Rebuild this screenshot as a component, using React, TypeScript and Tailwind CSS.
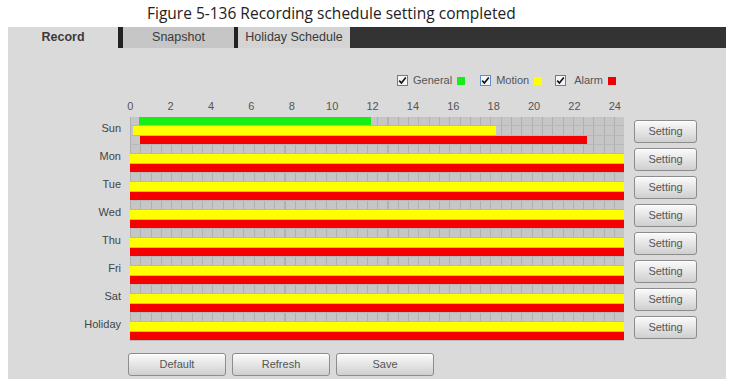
import React from "react"

type Bar = { from: number; to: number }
type Day = { name: string; general: Bar[]; motion: Bar[]; alarm: Bar[] }

const full: Bar[] = [{ from: 0, to: 24 }]

const days: Day[] = [
  { name: "Sun", general: [{ from: 0.44, to: 11.7 }], motion: [{ from: 0.15, to: 17.8 }], alarm: [{ from: 0.5, to: 22.2 }] },
  { name: "Mon", general: [], motion: full, alarm: full },
  { name: "Tue", general: [], motion: full, alarm: full },
  { name: "Wed", general: [], motion: full, alarm: full },
  { name: "Thu", general: [], motion: full, alarm: full },
  { name: "Fri", general: [], motion: full, alarm: full },
  { name: "Sat", general: [], motion: full, alarm: full },
  { name: "Holiday", general: [], motion: full, alarm: full },
]

const hours = [0, 2, 4, 6, 8, 10, 12, 14, 16, 18, 20, 22, 24]

const font = { fontFamily: '"Liberation Sans", Arial, sans-serif' }

const Check = ({ blue }: { blue?: boolean }) => (
  <span className={`flex h-[11px] w-[11px] items-center justify-center border bg-[#f4f4f4] ${blue ? "border-[#5b8fd0]" : "border-[#7a7a7a]"}`}>
    <svg width="9" height="9" viewBox="0 0 9 9">
      <path d="M1.2 4.6 L3.4 7 L7.8 1.4" fill="none" stroke="#111" strokeWidth="1.6" />
    </svg>
  </span>
)

const Btn = ({ label, w }: { label: string; w: string }) => (
  <div className={`${w} flex h-[23px] items-center justify-center rounded-[3px] border border-[#8c8c8c] bg-gradient-to-b from-[#fbfbfb] to-[#cfcfcf] text-[11px] text-[#555] shadow-[inset_0_1px_0_#fff]`}>
    {label}
  </div>
)

const SubRow = ({ bars, color, h }: { bars: Bar[]; color: string; h: string }) => (
  <div className={`relative ${h} border-b border-[#b8b8b8] bg-[#c6c6c6] bg-[repeating-linear-gradient(90deg,#b0b0b0_0px,#b0b0b0_1px,transparent_1px,transparent_10.3px)]`}>
    {bars.map((b, i) => (
      <div
        key={i}
        className={`absolute top-0 h-full ${color}`}
        style={{ left: `${(b.from / 24) * 100}%`, width: `${((b.to - b.from) / 24) * 100}%` }}
      />
    ))}
  </div>
)

export default function App() {
  return (
    <div className="h-[387px] w-[739px] bg-white" style={font}>
      <div className="flex h-[27px] items-center pl-[147px] text-[15.5px] text-[#222]" style={{ fontFamily: '"Open Sans", sans-serif' }}>
        Figure 5-136 Recording schedule setting completed
      </div>

      <div className="ml-[8px] w-[718px] bg-[#dadada] pb-[3px]">
        {/* tabs */}
        <div className="flex h-[21px] bg-[#333333] text-[12.5px] text-[#3a3a3a]">
          <div className="flex w-[110px] items-center justify-center bg-[#dadada] font-bold">Record</div>
          <div className="w-[5px] bg-[#222]" />
          <div className="flex w-[111px] items-center justify-center bg-[#c6c6c6]">Snapshot</div>
          <div className="w-[4px] bg-[#222]" />
          <div className="flex w-[112px] items-center justify-center bg-[#d4d4d4]">Holiday Schedule</div>
        </div>

        {/* legend */}
        <div className="mt-[27px] flex h-[11px] items-center pl-[389px] text-[11px] text-[#555]">
          <Check />
          <span className="ml-[5px]">General</span>
          <span className="ml-[5px] h-[8px] w-[8px] bg-[#16ee16]" />
          <span className="ml-[15px]"><Check blue /></span>
          <span className="ml-[5px]">Motion</span>
          <span className="ml-[5px] h-[8px] w-[8px] bg-[#ffff00]" />
          <span className="ml-[13px]"><Check /></span>
          <span className="ml-[8px]">Alarm</span>
          <span className="ml-[5px] h-[8px] w-[8px] bg-[#f00000]" />
        </div>

        {/* hour labels */}
        <div className="mt-[14px] flex h-[12px] items-center pl-[102px] text-[11px] leading-none text-[#555]">
          {hours.map((h) => (
            <span key={h} className="w-[40.4px] text-center">{h}</span>
          ))}
        </div>

        {/* schedule grid */}
        <div className="mt-[5px] flex flex-col">
          {days.map((d) => (
            <div key={d.name} className="flex h-[28px] items-stretch">
              <div className="w-[113px] pt-[5px] text-right text-[11px] leading-[13px] text-[#444]">{d.name}</div>
              <div className="ml-[9px] flex w-[494px] flex-col">
                <SubRow bars={d.general} color="bg-[#16ee16]" h="h-[9px]" />
                <SubRow bars={d.motion} color="bg-[#ffff00]" h="h-[10px]" />
                <SubRow bars={d.alarm} color="bg-[#f40000]" h="h-[9px]" />
              </div>
              <div className="ml-[10px] flex items-center">
                <Btn label="Setting" w="w-[63px]" />
              </div>
            </div>
          ))}
        </div>

        {/* bottom buttons */}
        <div className="mt-[12px] flex gap-[6px] pl-[120px]">
          <Btn label="Default" w="w-[98px]" />
          <Btn label="Refresh" w="w-[98px]" />
          <Btn label="Save" w="w-[98px]" />
        </div>
      </div>
    </div>
  )
}
